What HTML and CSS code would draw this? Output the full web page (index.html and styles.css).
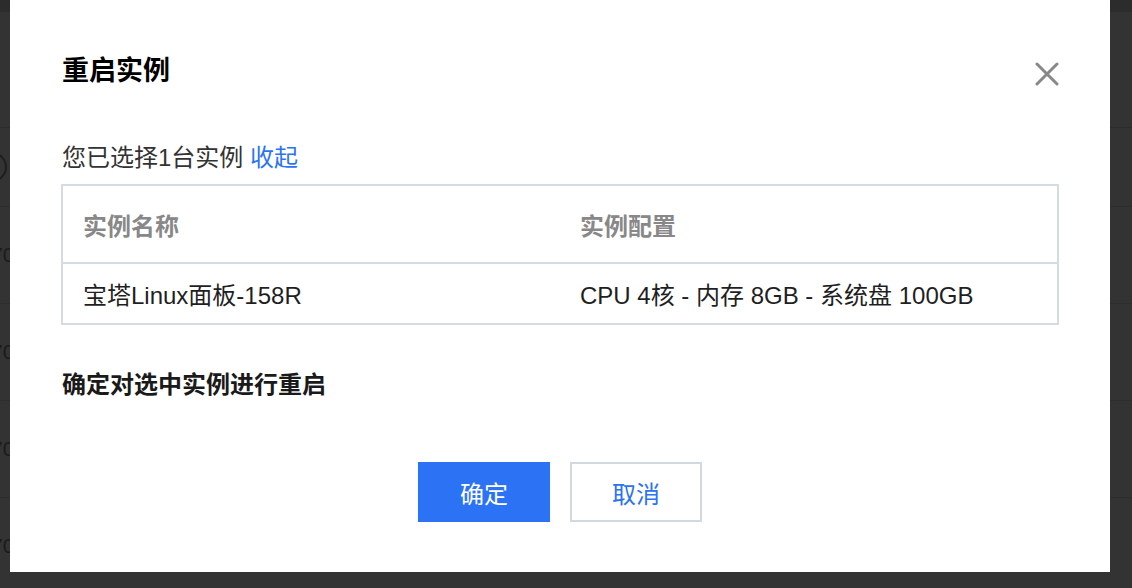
FILE: index.html
```html
<!DOCTYPE html>
<html lang="zh-CN">
<head>
<meta charset="utf-8">
<title>重启实例</title>
<link rel="stylesheet" href="styles.css">
</head>
<body>
<div class="page">
  <div class="page-top"></div>
  <div class="page-gap"></div>
  <div class="page-row"><span class="ring"></span></div>
  <div class="page-row"><span class="num">70</span></div>
  <div class="page-row"><span class="num">70</span></div>
  <div class="page-row"><span class="num">70</span></div>
  <div class="page-row"><span class="num">70</span></div>
</div>

<div class="dialog">
  <div class="dialog-head">
    <h1 class="dialog-title">重启实例</h1>
    <button class="close" aria-label="关闭">
      <svg width="24" height="24" viewBox="0 0 24 24"><path d="M2 2 L22 22 M22 2 L2 22" stroke="#888" stroke-width="3" stroke-linecap="round" fill="none"/></svg>
    </button>
  </div>
  <p class="picked">您已选择1台实例 <a class="link" href="#">收起</a></p>
  <div class="table">
    <div class="tr th">
      <div class="td">实例名称</div>
      <div class="td">实例配置</div>
    </div>
    <div class="tr tb">
      <div class="td">宝塔Linux面板-158R</div>
      <div class="td">CPU 4核 - 内存 8GB - 系统盘 100GB</div>
    </div>
  </div>
  <p class="confirm">确定对选中实例进行重启</p>
  <div class="actions">
    <button class="btn primary">确定</button>
    <button class="btn">取消</button>
  </div>
</div>
</body>
</html>
```
FILE: styles.css
```css
* { box-sizing: border-box; }
html, body { margin: 0; padding: 0; }
body {
  width: 1132px;
  height: 588px;
  overflow: hidden;
  background: #333333;
  font-family: "Liberation Sans", "Noto Sans CJK SC", sans-serif;
  position: relative;
}

.page { display: flex; flex-direction: column; }
.page-top { height: 12px; background: #2c2c2c; }
.page-gap { height: 116px; border-bottom: 1px solid #2c2c2c; }
.page-row {
  height: 97px;
  border-bottom: 1px solid #2d2d2d;
  display: flex;
  align-items: center;
  font-size: 21px;
  color: #1b1b1b;
}
.page-row:nth-child(3) { height: 79px; }
.num { margin-left: -9px; }
.ring {
  width: 30px; height: 30px;
  border: 2px solid #1e1e1e;
  border-radius: 50%;
  margin-left: -23px;
}

.dialog {
  position: absolute;
  left: 10px;
  top: 0;
  width: 1100px;
  height: 572px;
  background: #fff;
  padding: 0 51px;
  display: flex;
  flex-direction: column;
}

.dialog-head {
  margin-top: 51px;
  height: 40px;
  display: flex;
  align-items: center;
  justify-content: space-between;
}
.dialog-title {
  margin: 0;
  font-size: 27px;
  line-height: 40px;
  font-weight: bold;
  color: #000;
  padding-left: 1px;
}
.close {
  border: 0;
  background: none;
  padding: 0;
  width: 24px;
  height: 24px;
  margin-right: 0;
  margin-top: 6px;
  cursor: pointer;
}
.close svg { display: block; }

.picked {
  margin: 51px 0 0 1px;
  font-size: 24px;
  line-height: 32px;
  color: #333;
}
.link { color: #2b72f5; text-decoration: none; }

.table {
  margin-top: 10px;
  border: 2px solid #d6dae2;
  display: flex;
  flex-direction: column;
}
.tr { display: grid; grid-template-columns: 1fr 1fr; }
.td { padding-left: 20px; display: flex; align-items: center; font-size: 24px; }
.th { height: 78px; border-bottom: 2px solid #d6dae2; }
.th .td { color: #888; font-weight: bold; }
.tb { height: 59px; }
.tb .td { color: #1f1f1f; }

.confirm {
  margin: 44px 0 0 1px;
  font-size: 24px;
  line-height: 32px;
  font-weight: bold;
  color: #1a1a1a;
}

.actions {
  margin-top: 61px;
  display: flex;
  justify-content: center;
  gap: 20px;
}
.btn {
  width: 132px;
  height: 60px;
  font-family: inherit;
  font-size: 24px;
  border: 2px solid #d3d7df;
  background: #fff;
  color: #2b72f5;
  cursor: pointer;
}
.btn.primary {
  background: #2b72f5;
  border-color: #2b72f5;
  color: #fff;
}
```
